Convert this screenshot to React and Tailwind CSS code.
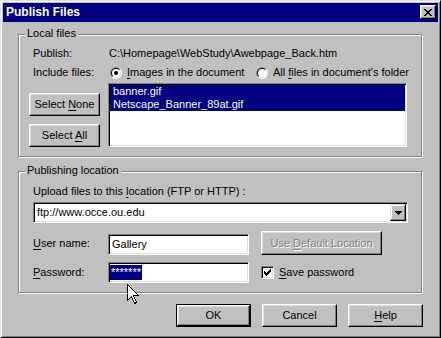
import React from "react";

const U = ({ children }) => (
  <span className="underline decoration-1 underline-offset-[2px]">{children}</span>
);

function Btn({ children, className = "", disabled = false }) {
  return (
    <div
      className={
        "flex items-center justify-center bg-[#c0c0c0] border border-t-white border-l-white border-r-black border-b-black shadow-[inset_-1px_-1px_0_#808080,inset_1px_1px_0_#dfdfdf] " +
        (disabled ? "text-[#808080] [text-shadow:1px_1px_0_#fff] " : "text-black ") +
        className
      }
    >
      {children}
    </div>
  );
}

const sunken =
  "border border-t-[#808080] border-l-[#808080] border-r-white border-b-white shadow-[inset_1px_1px_0_#000,inset_-1px_-1px_0_#dfdfdf] bg-white";

function Radio({ checked, id }) {
  return (
    <svg width="12" height="12" viewBox="0 0 12 12" className="shrink-0">
      <defs>
        <clipPath id={id}>
          <polygon points="0,0 12,0 0,12" />
        </clipPath>
      </defs>
      <circle cx="6" cy="6" r="6" fill="#ffffff" />
      <circle cx="6" cy="6" r="6" fill="#808080" clipPath={`url(#${id})`} />
      <circle cx="6" cy="6" r="5" fill="#dfdfdf" />
      <circle cx="6" cy="6" r="5" fill="#000000" clipPath={`url(#${id})`} />
      <circle cx="6" cy="6" r="4" fill="#ffffff" />
      {checked && <circle cx="6" cy="6" r="2" fill="#000000" />}
    </svg>
  );
}

function Group({ label, className = "", children }) {
  return (
    <div
      className={
        "relative border border-[#808080] shadow-[inset_1px_1px_0_#fff,1px_1px_0_#fff] " +
        className
      }
    >
      <div className="absolute left-[6px] top-[-8px] px-[2px] bg-[#c0c0c0] leading-[13px] h-[13px]">
        {label}
      </div>
      {children}
    </div>
  );
}

export default function App() {
  return (
    <div className="w-[441px] h-[338px] bg-[#c0c0c0] font-['Liberation_Sans',Arial,sans-serif] text-[11px] leading-[13px] text-black">
      <div className="relative w-[441px] h-[338px] border border-t-[#dfdfdf] border-l-[#dfdfdf] border-r-black border-b-black shadow-[inset_1px_1px_0_#fff,inset_-1px_-1px_0_#808080] p-[2px] flex flex-col">
        {/* Title bar */}
        <div className="h-[19px] bg-[#000080] flex items-start justify-between pl-[3px] pr-[2px]">
          <div className="text-white font-bold text-[12px] leading-[19px]">Publish Files</div>
          <div className="mt-[2px] w-[16px] h-[14px] bg-[#c0c0c0] border border-t-white border-l-white border-r-black border-b-black shadow-[inset_-1px_-1px_0_#808080,inset_1px_1px_0_#dfdfdf] flex items-center justify-center">
            <svg width="8" height="7" viewBox="0 0 8 7" shapeRendering="crispEdges">
              <path
                d="M0 0h2v1H0zM6 0h2v1H6zM1 1h2v1H1zM5 1h2v1H5zM2 2h4v1H2zM3 3h2v1H3zM2 4h4v1H2zM1 5h2v1H1zM5 5h2v1H5zM0 6h2v1H0zM6 6h2v1H6z"
                fill="#000"
              />
            </svg>
          </div>
        </div>

        <div className="pl-[15px] flex flex-col">
          {/* Local files */}
          <Group label="Local files" className="mt-[12px] w-[404px] h-[123px] pt-[12px] pl-[10px]">
            <div className="ml-[4px] flex h-[13px]">
              <div className="w-[76px]">Publish:</div>
              <div>C:\Homepage\WebStudy\Awebpage_Back.htm</div>
            </div>
            <div className="ml-[4px] mt-[6px] flex items-center h-[13px]">
              <div className="w-[77px]">Include files:</div>
              <div className="w-[146px] flex items-center gap-[5px]">
                <Radio checked id="r1" />
                <span>
                  <U>I</U>mages in the document
                </span>
              </div>
              <div className="flex items-center gap-[5px]">
                <Radio id="r2" />
                <span>
                  All <U>f</U>iles in document's folder
                </span>
              </div>
            </div>
            <div className="mt-[4px] flex h-[64px]">
              <div className="w-[71px] flex flex-col justify-end gap-[8px]">
                <Btn className="h-[23px]">
                  <span>
                    Select <U>N</U>one
                  </span>
                </Btn>
                <Btn className="h-[23px]">
                  <span>
                    Select <U>A</U>ll
                  </span>
                </Btn>
              </div>
              <div className={"ml-[8px] w-[299px] h-[64px] p-[1px] " + sunken}>
                <div>
                  <div className="bg-[#000080] text-white pl-[3px] h-[13px]">banner.gif</div>
                  <div className="bg-[#000080] text-white pl-[3px] h-[13px]">Netscape_Banner_89at.gif</div>
                </div>
              </div>
            </div>
          </Group>

          {/* Publishing location */}
          <Group label="Publishing location" className="mt-[14px] w-[404px] h-[122px] pt-[13px] pl-[14px]">
            <div className="h-[13px]">
              Upload files to this <U>l</U>ocation (FTP or HTTP) :
            </div>
            <div className={"mt-[4px] w-[375px] h-[21px] p-[1px] flex " + sunken}>
              <div className="flex-1 flex items-center pl-[2px]">ftp://www.occe.ou.edu</div>
              <div className="w-[16px] h-[17px] bg-[#c0c0c0] border border-t-[#dfdfdf] border-l-[#dfdfdf] border-r-black border-b-black shadow-[inset_-1px_-1px_0_#808080,inset_1px_1px_0_#fff] flex items-center justify-center">
                <svg width="7" height="4" viewBox="0 0 7 4" shapeRendering="crispEdges">
                  <path d="M0 0h7v1H0zM1 1h5v1H1zM2 2h3v1H2zM3 3h1v1H3z" fill="#000" />
                </svg>
              </div>
            </div>
            <div className="mt-[8px] flex items-end h-[24px]">
              <div className="w-[75px] self-center">
                <U>U</U>ser name:
              </div>
              <div className={"w-[141px] h-[21px] flex items-center pl-[3px] " + sunken}>Gallery</div>
              <Btn disabled className="ml-[12px] w-[121px] h-[24px]">
                <span>
                  Use <U>D</U>efault Location
                </span>
              </Btn>
            </div>
            <div className="mt-[7px] flex items-center h-[21px]">
              <div className="w-[75px]">
                <U>P</U>assword:
              </div>
              <div className={"w-[141px] h-[21px] flex items-center pl-[1px] " + sunken}>
                <span className="bg-[#000080] text-white h-[15px] leading-[15px] px-[1px]">*******</span>
              </div>
              <div className={"ml-[12px] w-[13px] h-[13px] flex items-center justify-center " + sunken}>
                <svg width="7" height="7" viewBox="0 0 7 7" shapeRendering="crispEdges">
                  <path
                    d="M6 0h1v1H6zM5 1h2v1H5zM0 2h1v1H0zM4 2h3v1H4zM0 3h2v1H0zM3 3h3v1H3zM0 4h5v1H0zM1 5h3v1H1zM2 6h1v1H2z"
                    fill="#000"
                  />
                </svg>
              </div>
              <div className="ml-[5px]">
                <U>S</U>ave password
              </div>
            </div>
          </Group>

          {/* Bottom buttons */}
          <div className="mt-[11px] w-[405px] flex justify-end gap-[11px]">
            <div className="w-[75px] h-[23px] border border-black">
              <Btn className="w-full h-full">OK</Btn>
            </div>
            <Btn className="w-[75px] h-[23px]">Cancel</Btn>
            <Btn className="w-[75px] h-[23px]">
              <span>
                <U>H</U>elp
              </span>
            </Btn>
          </div>
        </div>

        {/* Mouse cursor */}
        <svg
          className="absolute left-[126px] top-[283px]"
          width="13"
          height="21"
          viewBox="0 0 13 21"
          shapeRendering="crispEdges"
        >
          <path
            d="M0.5 0.5 L0.5 16.5 L4.5 12.5 L7.5 19.5 L9.5 18.5 L6.5 11.5 L11.5 11.5 Z"
            fill="#fff"
            stroke="#000"
            strokeWidth="1"
          />
        </svg>
      </div>
    </div>
  );
}
